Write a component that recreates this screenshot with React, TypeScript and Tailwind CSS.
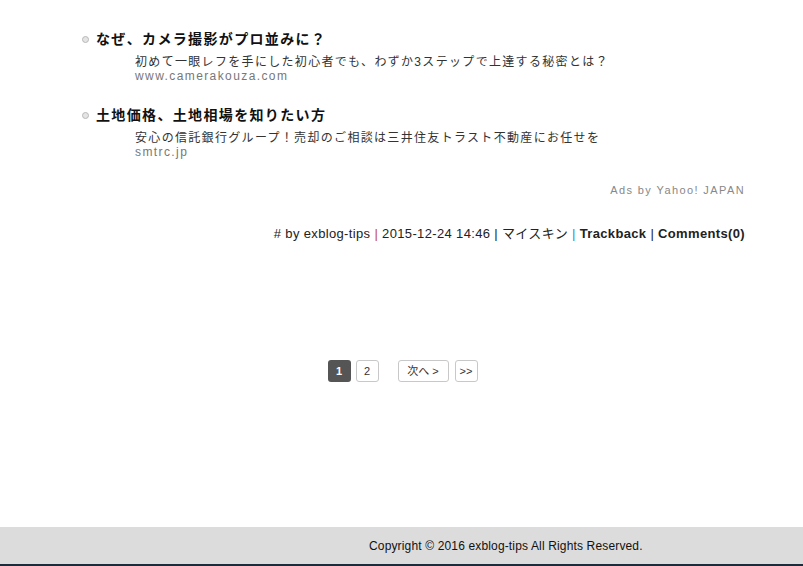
import React from 'react';

const ads = [
  {
    title: 'なぜ、カメラ撮影がプロ並みに？',
    desc: '初めて一眼レフを手にした初心者でも、わずか3ステップで上達する秘密とは？',
    url: 'www.camerakouza.com',
  },
  {
    title: '土地価格、土地相場を知りたい方',
    desc: '安心の信託銀行グループ！売却のご相談は三井住友トラスト不動産にお任せを',
    url: 'smtrc.jp',
  },
];

const jp = { fontFamily: '"Liberation Sans", "Noto Sans CJK JP", sans-serif' };

const App: React.FC = () => {
  return (
    <div className="w-[803px] h-[566px] bg-white flex flex-col text-[#222]" style={jp}>
      <div className="pl-[82px] pr-[58px] pt-[29px]">
        {ads.map((ad, i) => (
          <div key={i} className={i > 0 ? 'mt-[22px]' : ''}>
            <div className="flex items-center h-5">
              <span className="w-[7px] h-[7px] rounded-full bg-[#e4e4e4] border border-[#b8b8b8] mr-[7px]" />
              <span className="text-[14px] font-bold tracking-[1.35px] text-[#111]">{ad.title}</span>
            </div>
            <div className="pl-[53px] mt-[6px]">
              <div className="text-[12px] leading-[14px] tracking-[1.32px] text-[#333]">{ad.desc}</div>
              <div className="text-[12px] leading-[14px] tracking-[1.4px] text-[#777]">{ad.url}</div>
            </div>
          </div>
        ))}
        <div className="mt-[24px] text-right text-[11px] leading-[14px] tracking-[1.4px] text-[#888]">
          Ads by Yahoo! JAPAN
        </div>
        <div className="mt-[28px] text-right text-[13px] leading-[18px] tracking-[0.35px] text-[#222]">
          # by exblog-tips <span className="text-[#c8501e]">|</span> 2015-12-24 14:46{' '}
          <span>|</span> マイスキン <span className="text-[#2a8fd0]">|</span>{' '}
          <span className="font-bold">Trackback</span> | <span className="font-bold">Comments(0)</span>
        </div>
      </div>

      <div className="mt-[117px] flex justify-center items-center text-[11px] pl-[2px]">
        <span className="w-[23px] h-[22px] rounded-[3px] bg-[#555] text-white font-bold flex items-center justify-center">
          1
        </span>
        <span className="ml-[5px] w-[23px] h-[22px] rounded-[3px] border border-[#c8c8c8] text-[#333] flex items-center justify-center">
          2
        </span>
        <span className="ml-[19px] w-[51px] h-[22px] rounded-[3px] border border-[#c8c8c8] text-[#333] flex items-center justify-center">
          次へ &gt;
        </span>
        <span className="ml-[6px] w-[23px] h-[22px] rounded-[3px] border border-[#c8c8c8] text-[#333] flex items-center justify-center">
          &gt;&gt;
        </span>
      </div>

      <div className="mt-auto h-[39px] bg-[#dcdcdc] border-b-2 border-[#1c2a3a] flex items-center pl-[369px] text-[12px] tracking-[0.15px] text-[#111]">
        Copyright © 2016 exblog-tips All Rights Reserved.
      </div>
    </div>
  );
};

export default App;
